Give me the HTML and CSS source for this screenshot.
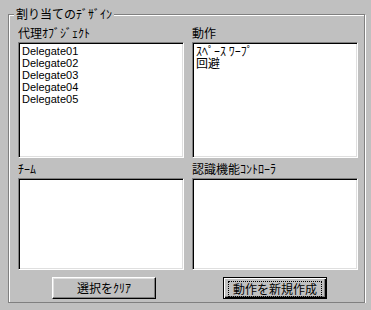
FILE: index.html
```html
<!DOCTYPE html>
<html lang="ja">
<head>
  <meta charset="UTF-8" />
  <title>割り当てのデザイン</title>
  <link rel="stylesheet" href="styles.css">
</head>
<body>
  <div class="group">
    <span class="legend">割り当てのﾃﾞｻﾞｲﾝ</span>
    <div class="grid">
      <div class="cell">
        <div class="label">代理ｵﾌﾞｼﾞｪｸﾄ</div>
        <div class="list tall">
          <div class="item latin">Delegate01</div>
          <div class="item latin">Delegate02</div>
          <div class="item latin">Delegate03</div>
          <div class="item latin">Delegate04</div>
          <div class="item latin">Delegate05</div>
        </div>
      </div>
      <div class="cell">
        <div class="label">動作</div>
        <div class="list tall">
          <div class="item">ｽﾍﾟｰｽ ﾜｰﾌﾟ</div>
          <div class="item">回避</div>
        </div>
      </div>
      <div class="cell row2">
        <div class="label">ﾁｰﾑ</div>
        <div class="list short"></div>
      </div>
      <div class="cell row2">
        <div class="label">認識機能ｺﾝﾄﾛｰﾗ</div>
        <div class="list short"></div>
      </div>
      <div class="cell">
        <button class="btn btn-clear">選択をｸﾘｱ</button>
      </div>
      <div class="cell">
        <button class="btn btn-default btn-new"><span class="focus">動作を新規作成</span></button>
      </div>
    </div>
  </div>
</body>
</html>
```

FILE: styles.css
```css
body {
  margin: 0;
  background: #c0c0c0;
  font-family: "Noto Sans CJK JP", "Noto Sans", sans-serif;
  font-size: 12px;
  line-height: 12px;
  color: #000;
}
.group {
  position: relative;
  box-sizing: border-box;
  width: 357px;
  height: 289px;
  margin: 14px 0 0 8px;
  padding: 12px 0 0 9px;
  border: 1px solid #808080;
  box-shadow: 1px 1px 0 #fff, inset 1px 1px 0 #fff;
}
.legend {
  position: absolute;
  top: -7px;
  left: 5px;
  padding: 0 2px;
  background: #c0c0c0;
  white-space: nowrap;
}
.grid {
  display: grid;
  grid-template-columns: 166px 166px;
  column-gap: 8px;
}
.label {
  height: 12px;
  margin-bottom: 3px;
  white-space: nowrap;
}
.row2 {
  margin-top: 5px;
}
.list {
  box-sizing: border-box;
  background: #fff;
  border-top: 1px solid #808080;
  border-left: 1px solid #808080;
  border-right: 1px solid #fff;
  border-bottom: 1px solid #fff;
  box-shadow: inset 1px 1px 0 #000, inset -1px -1px 0 #dfdfdf;
  padding: 2px 2px 0 3px;
}
.tall {
  height: 116px;
}
.short {
  height: 92px;
}
.item {
  height: 12px;
  white-space: nowrap;
}
.latin {
  font-family: "Liberation Sans", sans-serif;
  font-size: 11px;
}
.btn {
  box-sizing: border-box;
  width: 104px;
  height: 22px;
  margin-top: 7px;
  padding: 0;
  font: inherit;
  color: #000;
  background: #c0c0c0;
  border-top: 1px solid #fff;
  border-left: 1px solid #fff;
  border-right: 1px solid #000;
  border-bottom: 1px solid #000;
  box-shadow: inset -1px -1px 0 #808080, inset 1px 1px 0 #dfdfdf;
}
.btn-clear {
  margin-left: 34px;
}
.btn-new {
  margin-left: 31px;
}
.btn-default {
  border: 1px solid #000;
  box-shadow: inset 1px 1px 0 #fff, inset -1px -1px 0 #000, inset -2px -2px 0 #808080;
}
.focus {
  display: block;
  margin: 3px 4px;
  height: 12px;
  padding: 1px 0;
  border: 1px dotted #000;
  line-height: 12px;
}
```
